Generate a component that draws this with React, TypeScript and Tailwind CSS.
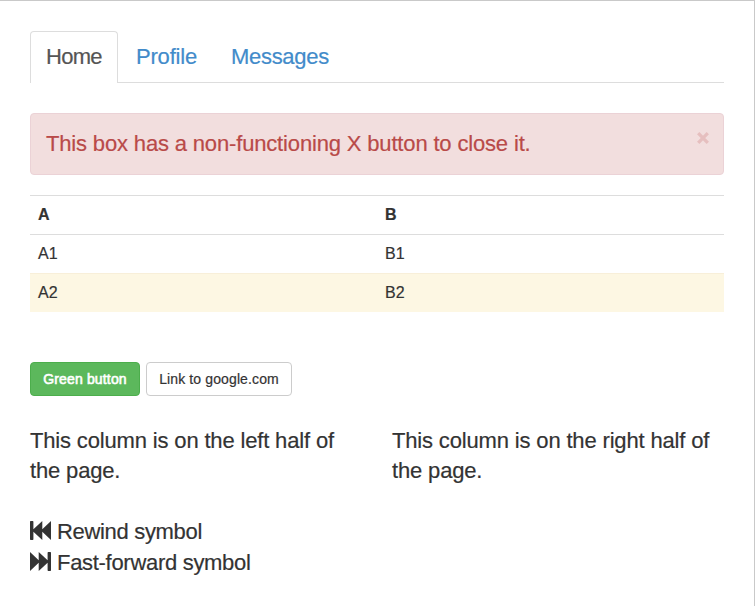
import type { ReactNode } from "react";

function Line({ children, className = "" }: { children: ReactNode; className?: string }) {
  return <span className={`whitespace-nowrap ${className}`}>{children}</span>;
}

function RewindIcon() {
  return (
    <svg width="21" height="19" viewBox="0 0 21 19" fill="currentColor" className="-mt-[3px] shrink-0" aria-hidden="true">
      <path d="M.7 0H2.7Q3.4 0 3.4 .7V8.2L12.3 0V8.2L21 0V19L12.3 10.8V19L3.4 10.8V18.3Q3.4 19 2.7 19H.7Q0 19 0 18.3V.7Q0 0 .7 0Z" />
    </svg>
  );
}

function ForwardIcon() {
  return (
    <svg width="21" height="19" viewBox="0 0 21 19" fill="currentColor" className="-mt-[3px] shrink-0" aria-hidden="true">
      <path d="M20.3 0H18.3Q17.6 0 17.6 .7V8.2L8.7 0V8.2L0 0V19L8.7 10.8V19L17.6 10.8V18.3Q17.6 19 18.3 19H20.3Q21 19 21 18.3V.7Q21 0 20.3 0Z" />
    </svg>
  );
}

export default function App() {
  return (
    <main className="h-[606px] w-[755px] overflow-hidden border-t border-r border-[#c9c9c9] bg-white px-[30px] pt-[30px] font-['Liberation_Sans',Arial,sans-serif] text-[22px] leading-[30px] text-[#333] [-webkit-text-stroke:0.2px_currentColor]">
      <div className="w-[694px]">
        <nav className="flex h-[52px] border-b border-[#ddd]">
          <a className="h-[52px] w-[88px] rounded-t border border-b-0 border-[#ddd] bg-white pt-[10px] pl-[15px] text-[#555]">
            <Line className="tracking-[-0.7px]">Home</Line>
          </a>
          <a className="h-[52px] w-[95px] pt-[11px] pl-[18px] text-[#428bca]">
            <Line className="tracking-[-0.2px]">Profile</Line>
          </a>
          <a className="h-[52px] pt-[11px] pl-[18px] text-[#428bca]">
            <Line className="tracking-[-0.3px]">Messages</Line>
          </a>
        </nav>

        <div className="mt-[30px] flex h-[62px] items-start justify-between rounded border border-[#ebd2d6] bg-[#f2dede] px-[15px] pt-[15px] text-[#b94a48]">
          <Line className="tracking-[-0.16px]">This box has a non-functioning X button to close it.</Line>
          <button className="mt-[3px] -mr-[1px]" aria-label="Close">
            <svg width="12" height="12" viewBox="0 0 12 12" fill="none" stroke="#e6bfbf" strokeWidth="3.3" aria-hidden="true">
              <path d="M1.2 1.2L10.8 10.8M10.8 1.2L1.2 10.8" />
            </svg>
          </button>
        </div>

        <table className="mt-5 w-full table-fixed border-collapse text-left text-[16px] leading-[22px]">
          <thead>
            <tr className="h-[39px] border-t border-[#ddd]">
              <th className="p-0 pl-2 font-bold">A</th>
              <th className="p-0 pl-2 font-bold">B</th>
            </tr>
          </thead>
          <tbody>
            <tr className="h-[39px] border-t border-[#ddd]">
              <td className="p-0 pl-2">A1</td>
              <td className="p-0 pl-2">B1</td>
            </tr>
            <tr className="h-[38px] border-t border-[#f8efd9] bg-[#fdf7e3]">
              <td className="p-0 pl-2">A2</td>
              <td className="p-0 pl-2">B2</td>
            </tr>
          </tbody>
        </table>

        <div className="mt-[50px] flex gap-[6px] text-[14px] leading-5">
          <button className="flex h-[34px] w-[110px] items-center justify-center rounded border border-[#4cae4c] bg-[#5cb85c] text-white [-webkit-text-stroke:0.6px_currentColor]">
            <Line className="tracking-[0.15px]">Green button</Line>
          </button>
          <a className="flex h-[34px] w-[146px] items-center justify-center rounded border border-[#ccc] bg-white">
            <Line className="tracking-[0.12px]">Link to google.com</Line>
          </a>
        </div>

        <div className="mt-[30px] grid grid-cols-[332px_332px] gap-[30px] tracking-[-0.16px]">
          <p>This column is on the left half of the page.</p>
          <p>This column is on the right half of the page.</p>
        </div>

        <div className="mt-[31px] flex h-[31px] items-center gap-[6px]">
          <RewindIcon />
          <Line className="tracking-[-0.32px]">Rewind symbol</Line>
        </div>
        <div className="flex h-[31px] items-center gap-[6px]">
          <ForwardIcon />
          <Line className="tracking-[-0.3px]">Fast-forward symbol</Line>
        </div>
      </div>
    </main>
  );
}
